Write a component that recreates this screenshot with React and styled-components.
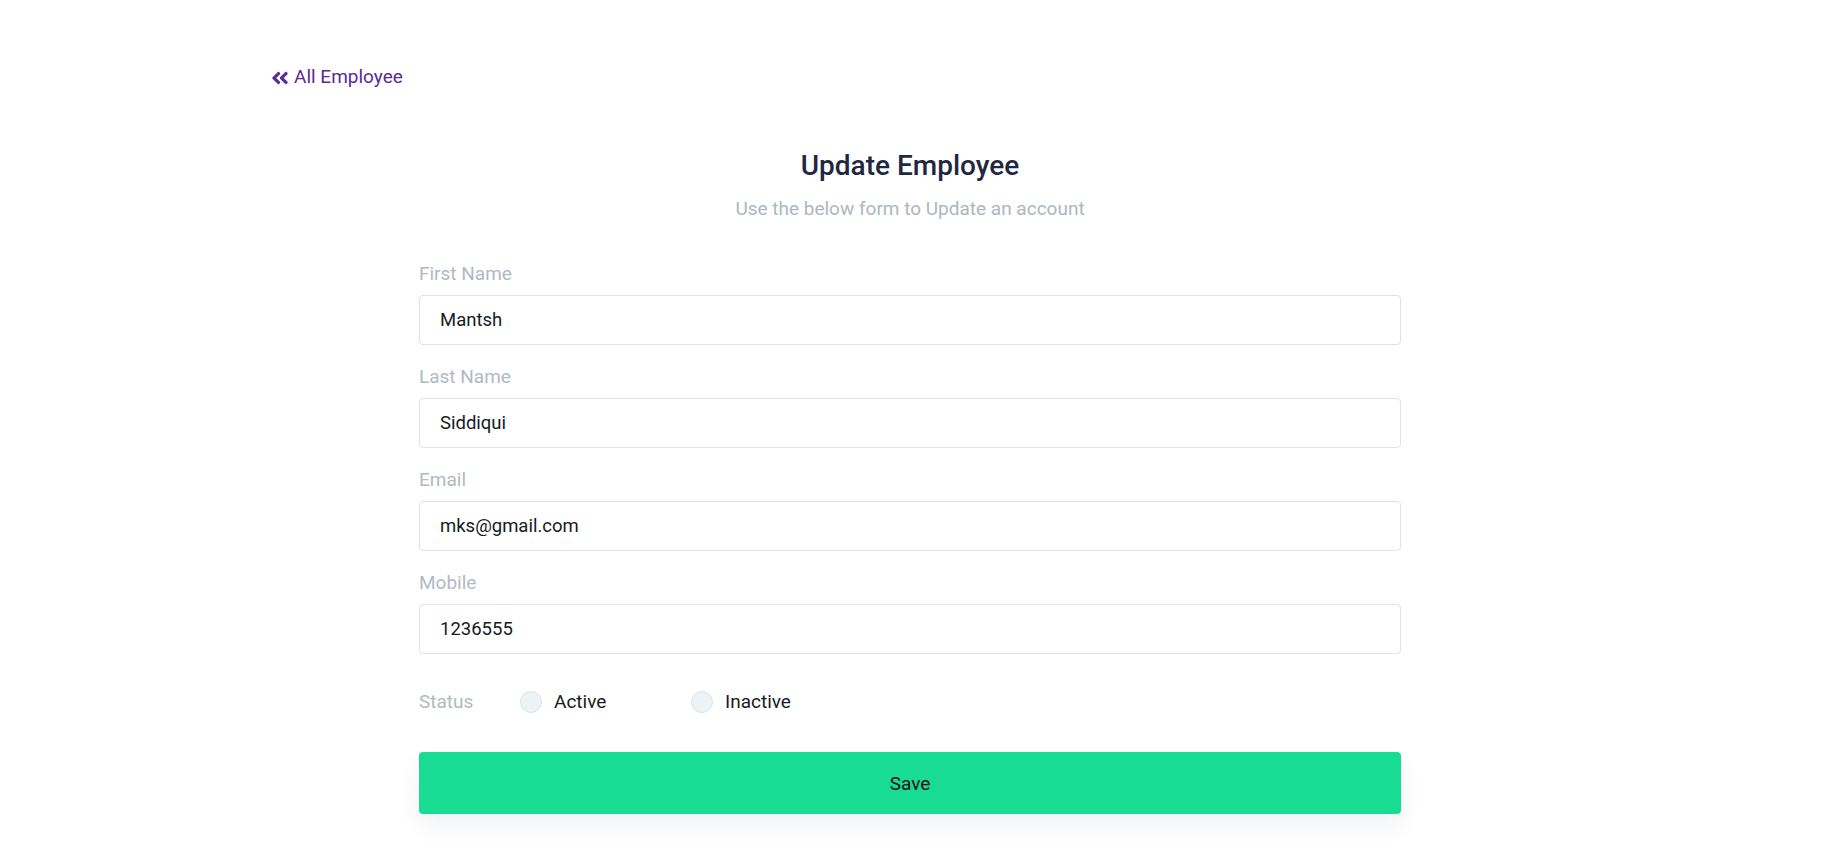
import React, { useState } from 'react';
import styled, { createGlobalStyle } from 'styled-components';
import { FaAngleDoubleLeft } from 'react-icons/fa';

const GlobalStyle = createGlobalStyle`
  html, body {
    margin: 0;
    padding: 0;
    background: #fff;
  }
  body {
    font-family: Roboto, "Liberation Sans", Arial, sans-serif;
    font-size: 19px;
    line-height: 1.5;
    color: #12263f;
  }
  * {
    box-sizing: border-box;
  }
`;

// right padding leaves room where the scrollbar sat in the original
const Page = styled.div`
  padding: 63px 17px 40px 0;
`;

const Container = styled.div`
  width: 1280px;
  margin: 0 auto;
`;

const BackLink = styled.a`
  display: flex;
  align-items: center;
  gap: 4px;
  width: fit-content;
  height: 28.5px;
  color: #5b2a96;
  text-decoration: none;
  font-size: 19px;
  line-height: 28.5px;
  cursor: pointer;

  svg {
    width: 20px;
    height: 20px;
    margin-top: 1px;
  }
`;

const FormWrap = styled.div`
  width: 982px;
  margin: 57px auto 0;
`;

const Title = styled.h2`
  margin: 0;
  text-align: center;
  font-size: 28px;
  font-weight: 500;
  line-height: 33.6px;
  color: #1e2841;
`;

const Subtitle = styled.p`
  margin: 13px 0 36px;
  text-align: center;
  color: #aeb6c0;
  font-size: 19px;
  line-height: 28.5px;
`;

const Group = styled.div`
  display: flex;
  flex-direction: column;
  gap: 6.5px;
  margin-bottom: 18px;
`;

const Label = styled.label`
  color: #b1b9c3;
  font-size: 19px;
  line-height: 28.5px;
`;

const Input = styled.input`
  width: 100%;
  height: 50px;
  padding: 0 20px;
  border: 1px solid #dfe2e7;
  border-radius: 4px;
  background: #fff;
  font-family: inherit;
  font-size: 18.5px;
  color: #161b22;
  outline: none;

  &:focus {
    border-color: #b9c3d0;
  }
`;

const StatusRow = styled.div`
  display: flex;
  align-items: center;
  margin-top: 34px;
  height: 28.5px;
`;

const StatusLabel = styled.span`
  width: 101px;
  color: #b1b9c3;
`;

const Option = styled.label`
  display: flex;
  align-items: center;
  gap: 12px;
  width: 171px;
  color: #161b22;
  cursor: pointer;
`;

const Radio = styled.span`
  width: 22px;
  height: 22px;
  border-radius: 50%;
  background: ${p => (p.$checked ? '#19dc94' : '#edf2f5')};
  border: 1px solid ${p => (p.$checked ? '#19dc94' : '#dce2e8')};
  box-shadow: ${p => (p.$checked ? 'inset 0 0 0 4px #fff' : 'none')};
`;

const SaveButton = styled.button`
  display: block;
  width: 100%;
  height: 62px;
  margin-top: 36px;
  border: none;
  border-radius: 4px;
  background: #19dc94;
  color: #111;
  font-family: inherit;
  font-size: 19px;
  cursor: pointer;
  box-shadow: 0 12px 24px rgba(18, 38, 63, 0.06);
`;

const fields = [
  { key: 'first', label: 'First Name', value: 'Mantsh' },
  { key: 'last', label: 'Last Name', value: 'Siddiqui' },
  { key: 'email', label: 'Email', value: 'mks@gmail.com' },
  { key: 'mobile', label: 'Mobile', value: '1236555' },
];

const App = () => {
  const [values, setValues] = useState(
    Object.fromEntries(fields.map(f => [f.key, f.value]))
  );
  const [status, setStatus] = useState('');

  return (
    <Page>
      <GlobalStyle />
      <Container>
        <BackLink>
          <FaAngleDoubleLeft />
          All Employee
        </BackLink>

        <FormWrap>
          <Title>Update Employee</Title>
          <Subtitle>Use the below form to Update an account</Subtitle>

          {fields.map(f => (
            <Group key={f.key}>
              <Label htmlFor={f.key}>{f.label}</Label>
              <Input
                id={f.key}
                value={values[f.key]}
                onChange={e => setValues({ ...values, [f.key]: e.target.value })}
              />
            </Group>
          ))}

          <StatusRow>
            <StatusLabel>Status</StatusLabel>
            <Option onClick={() => setStatus('active')}>
              <Radio $checked={status === 'active'} />
              Active
            </Option>
            <Option onClick={() => setStatus('inactive')}>
              <Radio $checked={status === 'inactive'} />
              Inactive
            </Option>
          </StatusRow>

          <SaveButton>Save</SaveButton>
        </FormWrap>
      </Container>
    </Page>
  );
};

export default App;
